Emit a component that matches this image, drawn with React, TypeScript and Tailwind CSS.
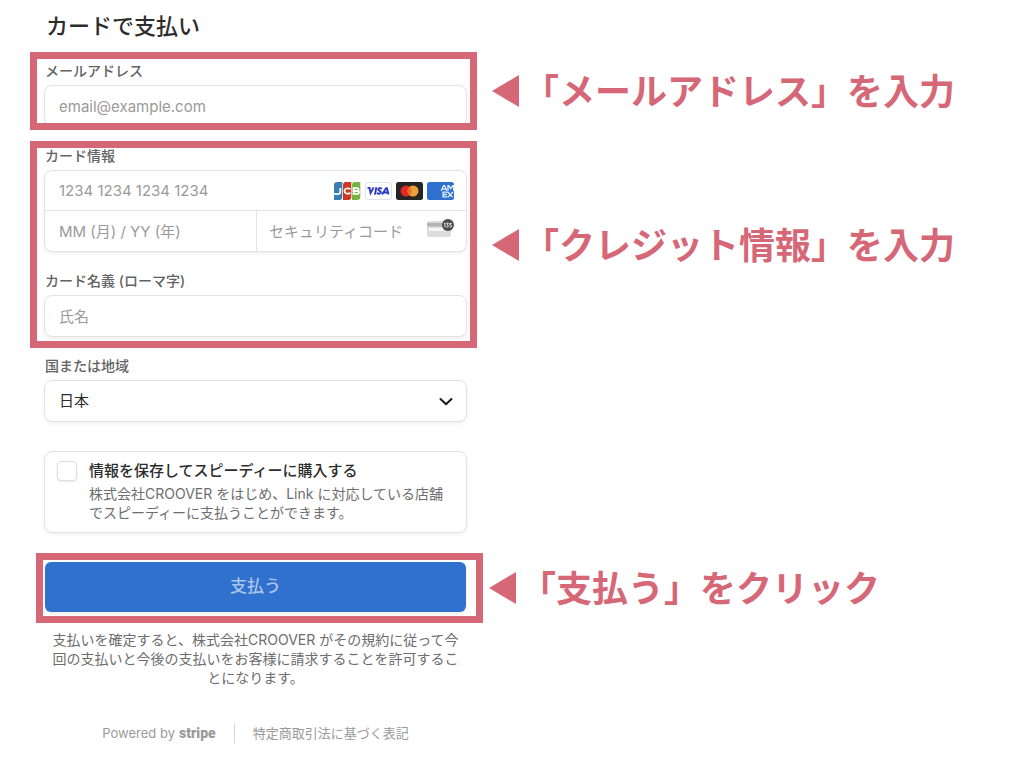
import { useState } from "react";
import type { ReactNode } from "react";
import clsx from "clsx";

const inputBase =
  "block w-full min-w-0 bg-transparent text-[15px] text-[#30313d] placeholder:text-[#9a9a9a] placeholder:opacity-100 focus:outline-none";
const boxBase = "rounded-lg border border-[#e3e3e3] bg-white shadow-[0_2px_4px_rgba(0,0,0,0.06)]";

export default function App() {
  const [save, setSave] = useState(false);

  return (
    <main className="min-h-screen bg-white pb-4 font-['Inter','Noto_Sans_CJK_JP',sans-serif] text-[#30313d]">
      <h1 className="pt-2.5 pl-[46px] text-[22px] leading-8 font-medium text-[#2c2c2c]">カードで支払い</h1>

      <form onSubmit={(e) => e.preventDefault()} className="pt-2.5">
        <Step note="「メールアドレス」を入力" className="ml-[30px] gap-[15px]">
          <div className="pt-1 pr-[3px] pl-[7px]">
            <FieldLabel htmlFor="email">メールアドレス</FieldLabel>
            <div className={clsx(boxBase, "-mb-1")}>
              <input id="email" type="email" placeholder="email@example.com" className={clsx(inputBase, "h-10 px-3.5")} />
            </div>
          </div>
        </Step>

        <Step note="「クレジット情報」を入力" className="mt-[11px] ml-[30px] gap-[15px]">
          <div className="pr-[3px] pb-1 pl-[7px]">
            <FieldLabel htmlFor="card-number">カード情報</FieldLabel>
            <div className={boxBase}>
              <div className="flex items-center border-b border-[#e3e3e3] pr-3">
                <input id="card-number" inputMode="numeric" placeholder="1234 1234 1234 1234" className={clsx(inputBase, "h-[39px] flex-1 pl-3.5")} />
                <CardBrands />
              </div>
              <div className="flex">
                <input aria-label="有効期限" placeholder="MM (月) / YY (年)" className={clsx(inputBase, "h-10 flex-1 border-r border-[#e3e3e3] pl-3.5")} />
                <div className="flex flex-1 items-center pr-3">
                  <input aria-label="セキュリティコード" placeholder="セキュリティコード" className={clsx(inputBase, "h-10 flex-1 pl-3")} />
                  <CvcIcon />
                </div>
              </div>
            </div>

            <div className="mt-[21px]">
              <FieldLabel htmlFor="name">カード名義 (ローマ字)</FieldLabel>
              <div className={boxBase}>
                <input id="name" placeholder="氏名" className={clsx(inputBase, "h-10 px-3.5")} />
              </div>
            </div>
          </div>
        </Step>

        <div className="mt-2.5 ml-11 max-w-[423px]">
          <FieldLabel htmlFor="country">国または地域</FieldLabel>
          <div className={clsx(boxBase, "flex items-center pr-3")}>
            <select id="country" className="h-10 flex-1 appearance-none bg-transparent pl-3.5 text-[15px] text-[#2c2c2c] focus:outline-none">
              <option>日本</option>
            </select>
            <svg viewBox="0 0 16 16" className="pointer-events-none size-4" fill="none" stroke="#1a1a1a" strokeWidth="2" strokeLinecap="round" strokeLinejoin="round">
              <path d="M2.500 6 8 11.200 13.500 6" />
            </svg>
          </div>

          <div className={clsx(boxBase, "mt-[29px] flex gap-3 px-3 pt-[9px] pb-2.5")}>
            <input
              id="save"
              type="checkbox"
              checked={save}
              onChange={(e) => setSave(e.target.checked)}
              className="size-5 shrink-0 appearance-none rounded border border-[#dedede] bg-white shadow-[0_1px_2px_rgba(0,0,0,0.08)] checked:bg-[#3071cd]"
            />
            <div>
              <label htmlFor="save" className="block text-[15px] leading-5 font-medium text-[#2c2c2c]">
                情報を保存してスピーディーに購入する
              </label>
              <p className="mt-[3px] text-sm leading-[19px] text-[#6d6d6d]">
                株式会社CROOVER をはじめ、Link に対応している店舗でスピーディーに支払うことができます。
              </p>
            </div>
          </div>
        </div>

        <Step note="「支払う」をクリック" className="mt-5 ml-9 gap-1.5">
          <div className="pt-0.5 pr-2.5 pb-1 pl-0.5">
            <button
              type="submit"
              className="h-[50px] w-full rounded-md bg-[#3071cd] text-[17px] font-medium text-[#a9c4ea] shadow-[0_2px_4px_rgba(0,0,0,0.08)]"
            >
              支払う
            </button>
          </div>
        </Step>
      </form>

      <div className="ml-11 max-w-[423px]">
        <p className="mt-[7px] px-1 text-center text-sm leading-[19px] text-[#6d6d6d]">
          支払いを確定すると、株式会社CROOVER がその規約に従って今回の支払いと今後の支払いをお客様に請求することを許可することになります。
        </p>
        <footer className="mt-9 flex items-center justify-center text-[13px] leading-5 text-[#9a9a9a]">
          <a href="#stripe" className="flex items-center gap-1">
            Powered by
            <span className="font-['Roboto',sans-serif] text-sm leading-5 font-black">stripe</span>
          </a>
          <span className="mx-[18px] h-5 w-px bg-[#d5d5d5]" />
          <a href="#law">特定商取引法に基づく表記</a>
        </footer>
      </div>
    </main>
  );
}

function Step({ note, className, children }: { note: string; className?: string; children: ReactNode }) {
  return (
    <section className={clsx("flex items-center", className)}>
      <div className="w-full max-w-[447px] overflow-hidden border-7 border-[#d66777]">{children}</div>
      <div className="flex shrink-0 items-center gap-1 text-[#d66777]">
        <svg viewBox="0 0 27 32" className="h-8 w-[27px]" fill="currentColor">
          <path d="M0 16 27 0v32z" />
        </svg>
        <span className="pt-0.5 text-4xl leading-10 font-bold whitespace-nowrap">{note}</span>
      </div>
    </section>
  );
}

function FieldLabel({ htmlFor, children }: { htmlFor: string; children: ReactNode }) {
  return (
    <label htmlFor={htmlFor} className="mb-1.5 block pl-px text-sm leading-4 font-medium text-[#636363]">
      {children}
    </label>
  );
}

function CardBrands() {
  return (
    <div className="flex shrink-0 gap-1">
      {/* JCB */}
      <svg viewBox="0 0 27 18" className="h-[18px] w-[27px]">
        <path d="M3 0h5.300v15a3 3 0 0 1-3 3H0V3a3 3 0 0 1 3-3z" fill="#3a7db5" />
        <path d="M12 0h5.300v15a3 3 0 0 1-3 3H9V3a3 3 0 0 1 3-3z" fill="#cb3a26" />
        <path d="M21 0h5.300v15a3 3 0 0 1-3 3H18V3a3 3 0 0 1 3-3z" fill="#75b443" />
        <g fill="none" stroke="#fff" strokeWidth="1.800">
          <path d="M6.300 6v4.300c0 2-3.200 2.300-6.300 1.200" />
          <path d="M16.500 6.800c-3-1-6-.5-6 2.200s3 3.200 6 2.200" />
          <path d="M18.500 6.200h4.600c2 0 2 2.700 0 2.800h-4.600 4.600c2.500 0 2.500 2.900 0 2.900h-4.600M19.800 6v6" />
        </g>
      </svg>
      {/* Visa */}
      <svg viewBox="0 0 27 18" className="h-[18px] w-[27px]">
        <rect x=".5" y=".5" width="26" height="17" rx="2" fill="#fff" stroke="#dfe3ea" />
        <g fill="none" stroke="#2b37c4" strokeWidth="1.900">
          <path d="M2.500 5.900h2l1.100 5.200L8.600 5.400" />
          <path d="m11.400 5.300-1.500 7.300" />
          <path d="M17 6.600c-1.600-.8-3.700-.5-3.700.8 0 1.500 2.900 1.400 2.600 3-.3 1.500-2.400 1.600-4.100.7" />
          <path d="m17.100 12.600 4-6.500h.8l1.600 6.500M19 10.500h4" />
        </g>
      </svg>
      {/* Mastercard */}
      <svg viewBox="0 0 27 18" className="h-[18px] w-[27px]">
        <rect width="27" height="18" rx="2.500" fill="#252525" />
        <circle cx="10" cy="9" r="5.500" fill="#df2a25" />
        <circle cx="17" cy="9" r="5.500" fill="#eba03c" />
        <path d="M13.500 4.800a5.500 5.500 0 0 1 0 8.400 5.500 5.500 0 0 1 0-8.400z" fill="#ed6a26" />
      </svg>
      {/* American Express */}
      <svg viewBox="0 0 27 18" className="h-[18px] w-[27px]">
        <rect width="27" height="18" rx="2.500" fill="#2f70cf" />
        <g fill="none" stroke="#e4edfa" strokeWidth="1.300">
          <path d="m14.200 8.700 2.400-5h1l2.300 5M15.600 7.200h3M21 8.700v-5h.8l2 3 2-3h.8v5" />
          <path d="M20.500 10.200H16v4.600h4.500M16 12.500h4M20.800 10l4.700 5M26 10l-5 5" />
        </g>
      </svg>
    </div>
  );
}

function CvcIcon() {
  return (
    <svg viewBox="0 0 27 18" className="mb-1.5 h-[18px] w-[27px] shrink-0">
      <rect y="2" width="24" height="16" rx="2" fill="#dcdcdc" />
      <rect y="4" width="24" height="3.500" fill="#b3b3b3" />
      <rect x="2" y="9" width="15" height="3" fill="#f5f5f5" />
      <circle cx="21" cy="6" r="6" fill="#4b4b4b" />
      <g fill="none" stroke="#fff" strokeWidth=".9">
        <path d="M17 4.800 18 4v4.300" />
        <path d="M19.300 4.200h2l-1 1.600c1.500.2 1.300 2.300-.1 2.300l-1-.3" />
        <path d="M24.800 4.300h-1.900l-.1 1.700c2.300-.4 2.400 2.200.7 2.200l-1-.3" />
      </g>
    </svg>
  );
}
